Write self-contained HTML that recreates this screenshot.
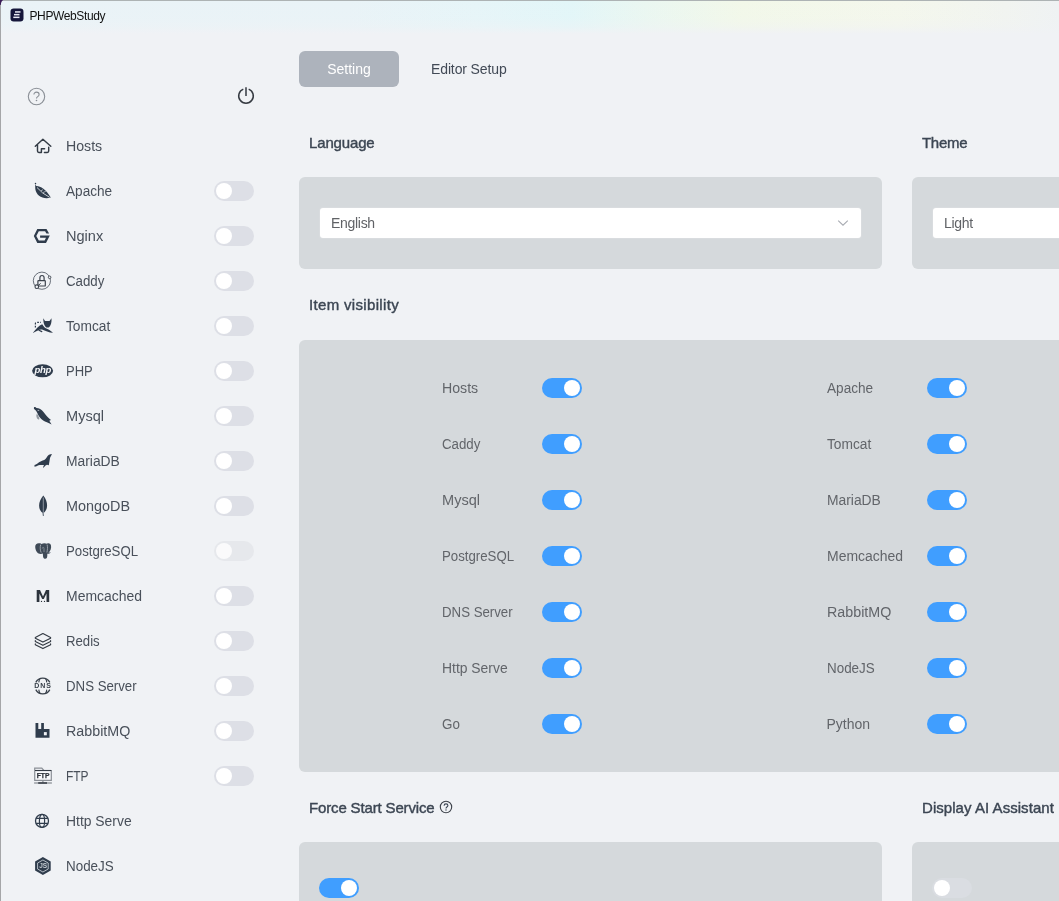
<!DOCTYPE html>
<html>
<head>
<meta charset="utf-8">
<style>
*{box-sizing:border-box;margin:0;padding:0}
html,body{width:1059px;height:901px;overflow:hidden;background:#f0f2f5;font-family:"Liberation Sans",sans-serif;}
#root{position:relative;width:1059px;height:901px;overflow:hidden;background:#f0f2f5;will-change:transform;filter:opacity(1);}
.abs{position:absolute}
#titlebar{left:0;top:0;width:1059px;height:36px;background:linear-gradient(to bottom,rgba(240,242,245,0) 0px,rgba(240,242,245,.08) 18px,rgba(240,242,245,.4) 27px,#f0f2f5 34px),linear-gradient(to right,#eaf3f7 0%,#e9f3f7 33%,#e6f5f8 45%,#e2f6f8 54%,#eaf7f1 61%,#f2f8e9 70%,#f4f7ec 85%,#f1f4f0 95%,#eff2f3 100%);}
#topline{left:0;top:0;width:1059px;height:1px;background:#adb3b4}
#leftline{left:0;top:0;width:1px;height:901px;background:#a5a6a8}
#title{left:29.5px;top:9px;letter-spacing:-0.38px;font-size:12px;color:#111;line-height:14px;white-space:nowrap}
.sb-item{left:0;width:280px;height:45px}
.sb-label{position:absolute;left:66px;top:14px;font-size:14px;line-height:16px;color:#49505a;white-space:nowrap;transform-origin:0 50%}
.sb-icon{position:absolute;left:30px;top:10px;width:24px;height:24px}
.sw{position:absolute;width:40px;height:20px;border-radius:10px;background:#dcdfe6}
.sw i{position:absolute;left:2px;top:2px;width:16px;height:16px;border-radius:50%;background:#fff}
.sw.on{background:#409eff}
.sw.on i{left:22px}
.sw.dis{background:#dddfe6}.sw.dis i{background:#fff}.sw.fade{background:#e6e8ec}.sw.fade i{background:#fafafb}.sw.fade2{background:#dadde2}.sw.fade2 i{background:#fff}
.sb-item .sw{left:214px;top:12px}
.h{font-size:15px;font-weight:normal;color:#3c4653;-webkit-text-stroke:0.4px #3c4653;line-height:18px;white-space:nowrap}
.panel{background:#d5d9dc;border-radius:6px}
.sel{background:#fff;border-radius:3px;height:30px;font-size:14px;color:#606266;line-height:30px;padding-left:11px;letter-spacing:-0.3px;box-shadow:0 0 0 1px #d9dcdf}
.vis{font-size:14px;color:#62656a;line-height:16px;white-space:nowrap;transform-origin:0 50%}
</style>
</head>
<body>
<div id="root">
<div id="titlebar" class="abs"></div>
<div id="topline" class="abs"></div>
<div id="leftline" class="abs"></div>
<svg class="abs" style="left:0;top:0" width="6" height="7" viewBox="0 0 6 7"><path d="M0 0H3.200C1.800 .8 1 2.300 .9 4.800L0 5z" fill="#3b1d57"/></svg>
<svg class="abs" style="left:10px;top:8px" width="14" height="14" viewBox="0 0 14 14"><rect x="0.5" y="0.5" width="13" height="13" rx="3.2" fill="#15163a"/><rect x="5" y="3.2" width="5.5" height="1.5" fill="#e8e9f4"/><rect x="4" y="5.9" width="5.5" height="1.5" fill="#e8e9f4"/><rect x="3.3" y="8.6" width="6.2" height="1.5" fill="#e8e9f4"/></svg>
<div id="title" class="abs">PHPWebStudy</div>

<!-- sidebar top icons -->
<svg class="abs" style="left:27px;top:87px" width="19" height="19" viewBox="0 0 19 19"><circle cx="9.5" cy="9.5" r="8.2" fill="none" stroke="#8a8f96" stroke-width="1.1"/><path d="M6.9 7.6c0-1.5 1.1-2.5 2.6-2.5s2.6 1 2.6 2.3c0 1.2-.7 1.7-1.4 2.2-.7.5-1.2.9-1.2 1.9" fill="none" stroke="#8a8f96" stroke-width="1.1"/><circle cx="9.5" cy="13.5" r=".8" fill="#8a8f96"/></svg>
<svg class="abs" style="left:236px;top:86px" width="20" height="20" viewBox="0 0 20 20"><path d="M7.300 3.100A7.300 7.300 0 1 0 12.700 3.100" fill="none" stroke="#363b42" stroke-width="1.5"/><path d="M10 1.300V10" stroke="#4a4f56" stroke-width="1.700"/></svg>

<div class="abs sb-item" style="top:124px"><svg class="sb-icon" viewBox="0 0 24 24"><path d="M5.3 12.3L12.9 5.3l7.900 7M7.500 10.800V17q0 1.400 1.400 1.400H11.400V14.700H14.600M18.700 13.300V17q0 1.400-1.400 1.400H14.400" fill="none" stroke="#333b45" stroke-width="1.45" stroke-linejoin="round" stroke-linecap="round"/></svg><div class="sb-label" style="transform:scaleX(1.01)">Hosts</div></div>
<div class="abs sb-item" style="top:169px"><svg class="sb-icon" viewBox="0 0 24 24"><path d="M5.300 4.200C5.400 5.800 5.800 6.500 6.600 7C10.500 7 16 10.500 20.800 18.600C13.500 20.900 6.300 17 5.300 10C5.100 7.800 5.200 6 5.300 4.200z" fill="#2f3c4c"/><circle cx="5.500" cy="4.600" r=".75" fill="#2f3c4c"/><path d="M7 8.500Q12 14.500 19.600 18.300" fill="none" stroke="#f0f2f5" stroke-width=".8"/><path d="M11 11.800l2-1.200M13 13.600l2.800-1.300" fill="none" stroke="#f0f2f5" stroke-width=".6"/></svg><div class="sb-label" style="transform:scaleX(0.972)">Apache</div><div class="sw dis"><i></i></div></div>
<div class="abs sb-item" style="top:214px"><svg class="sb-icon" viewBox="0 0 24 24"><path d="M7.300 4.900H16.500L19.100 9.500H16.400L15.100 7.300H8.800L6.300 12L8.800 16.500H14.600L16 13.800H10.100V11.600H19.800L16 18.900H7.300L3.800 12z" fill="#2f3c4c"/></svg><div class="sb-label" style="transform:scaleX(1.04)">Nginx</div><div class="sw dis"><i></i></div></div>
<div class="abs sb-item" style="top:259px"><svg class="sb-icon" viewBox="0 0 24 24"><circle cx="11.900" cy="11.700" r="8.600" fill="none" stroke="#59616b" stroke-width=".9"/><rect x="7.900" y="11.700" width="7.400" height="5.300" rx=".6" fill="#f0f2f5" stroke="#3c434d" stroke-width="1.200"/><path d="M9.900 11.700V8.800a2.100 2.300 0 0 1 4.200 0v2.900" fill="none" stroke="#3c434d" stroke-width="1.200"/><circle cx="19.600" cy="8.300" r="1.300" fill="#f0f2f5" stroke="#3c434d" stroke-width=".9"/><circle cx="6.800" cy="17.700" r="1.800" fill="#f0f2f5" stroke="#3c434d" stroke-width="1.100"/><path d="M8.200 16.500l2.500-2.100" stroke="#3c434d" stroke-width="1"/></svg><div class="sb-label" style="transform:scaleX(0.949)">Caddy</div><div class="sw dis"><i></i></div></div>
<div class="abs sb-item" style="top:304px"><svg class="sb-icon" viewBox="0 0 24 24"><path d="M13.300 4.300L15 7H19.500L21.500 4.300C21.800 8 21 11 19.500 12.700C18.500 13.900 16.500 13.900 15.500 12.700C13.800 10.700 13.200 8 13.300 4.300z" fill="#2f3c4c"/><path d="M3 18.800C6 15 9 11.500 12.200 10.200C13.500 12.500 15 14 17.500 15C19.500 15.800 21.500 17.500 23 18.800C19 18.800 15 16.500 12 15.500C9.500 15 6.500 17.200 3 18.900z" fill="#2f3c4c"/><path d="M5.400 13.500V9.600Q5.400 8.400 6.600 8.400H11" fill="none" stroke="#2f3c4c" stroke-width="1.200" stroke-dasharray="1.700 1.400"/><path d="M9 16.200L11.800 17.600" stroke="#2f3c4c" stroke-width="1.200" stroke-linecap="round"/></svg><div class="sb-label" style="transform:scaleX(0.982)">Tomcat</div><div class="sw dis"><i></i></div></div>
<div class="abs sb-item" style="top:349px"><svg class="sb-icon" viewBox="0 0 24 24"><ellipse cx="12.600" cy="11.800" rx="10.500" ry="6.500" fill="#2f3c4c"/><text x="12.800" y="14.200" font-family="Liberation Sans" font-style="italic" font-weight="bold" font-size="9.600" fill="#f6f7f9" text-anchor="middle" letter-spacing="-.3">php</text></svg><div class="sb-label" style="transform:scaleX(0.93)">PHP</div><div class="sw dis"><i></i></div></div>
<div class="abs sb-item" style="top:394px"><svg class="sb-icon" viewBox="0 0 24 24"><path d="M4.100 3.200C5 2.900 6 3.300 6.500 4C9 4 11.500 5.500 13.500 8C15.500 10.500 17.500 13.500 21 16L19.300 16.800L21.600 20.400C18 18.800 15.500 17.800 13.200 16.500C10.500 15 8.500 12 7.300 9C6.500 7 5.500 6 4.600 5.500C3.800 5 3.700 3.800 4.100 3.200z" fill="#2f3c4c"/><path d="M7.600 6.400h1.600" stroke="#c9ced4" stroke-width=".8"/><path d="M6.800 9.800C5.800 11.500 6.300 14.500 8.300 15.500C9 15.700 9.600 15.200 9.300 14.300L8 11z" fill="#9299a1"/></svg><div class="sb-label" style="transform:scaleX(1.04)">Mysql</div><div class="sw dis"><i></i></div></div>
<div class="abs sb-item" style="top:439px"><svg class="sb-icon" viewBox="0 0 24 24"><path d="M21.900 5C21.500 6.500 20.500 7.500 20 9C19.500 11.500 19.300 14 18.800 16.300L17 15.800L15.500 16.500L13.500 18.800L13 18.300L14 16C12 16 10 15.800 8.500 16.300C7 17 6 17.800 4.500 17.800V16C6.500 15.500 8 14 9.500 13C11.500 11.800 14 11.500 15.500 10C17 8.500 17.500 6.500 19 5.800C20 5.300 21 5.300 21.900 5z" fill="#2f3c4c"/></svg><div class="sb-label" style="transform:scaleX(0.989)">MariaDB</div><div class="sw dis"><i></i></div></div>
<div class="abs sb-item" style="top:484px"><svg class="sb-icon" viewBox="0 0 24 24"><path d="M13.300 1.500C16 5 17.100 8 17.100 11.500C17.100 15 15.500 17.500 13.800 18.800L13.600 21.900H12.900L12.600 18.800C10.500 17.500 9.100 15 9.100 11.500C9.100 8 10.600 5 13.300 1.500z" fill="#2f3c4c"/><path d="M13.300 3.500V20.500" stroke="#b6bcc2" stroke-width=".7"/></svg><div class="sb-label" style="transform:scaleX(1.028)">MongoDB</div><div class="sw dis"><i></i></div></div>
<div class="abs sb-item" style="top:529px"><svg class="sb-icon" viewBox="0 0 24 24"><path d="M5.200 8C5 5.500 7 3.800 9.500 4.200C10.500 4.300 11 4.700 11.500 5C13 4 15.500 4 17 4.800C18.500 3.800 20.500 4.500 21 6.500C21.500 9 20.500 12 18.500 13.800L20.800 13.300C20 14.500 18.500 15 17.300 14.800C17.300 16.500 17.400 18 16.800 19C16 20.200 13.800 20 13.300 18.500C12.900 17 13 15.500 12.800 14.500C11.500 15.100 9.500 15 8 14.200C6.300 13 5.300 10.500 5.200 8z" fill="#3f4a57"/><path d="M10.700 5.600C9.900 8 10.100 11.500 11.200 13.600M17.100 5.600C17.800 8 17.500 11 16.900 13.500" fill="none" stroke="#aeb5bd" stroke-width=".8"/><path d="M12.300 9.500C12.300 8 14 8 14 9.500V13" fill="none" stroke="#98a0a9" stroke-width=".7"/></svg><div class="sb-label" style="transform:scaleX(0.945)">PostgreSQL</div><div class="sw fade"><i></i></div></div>
<div class="abs sb-item" style="top:574px"><svg class="sb-icon" viewBox="0 0 24 24"><path d="M6.700 18.100V5.900H10L13 12.500L16 5.900H19.200V18.100H16.500V9.500L13.800 15H12.200L9.400 9.500V18.100z" fill="#2c333c"/><circle cx="11.500" cy="17.400" r=".65" fill="#2c333c"/><circle cx="14.500" cy="17.400" r=".65" fill="#2c333c"/></svg><div class="sb-label" style="transform:scaleX(0.997)">Memcached</div><div class="sw dis"><i></i></div></div>
<div class="abs sb-item" style="top:619px"><svg class="sb-icon" viewBox="0 0 24 24"><path d="M12.900 4.500L20.600 8.400V9.200L12.900 13.100L5.300 9.200V8.400z M5.300 11.600v.8L12.900 16.300L20.600 12.400v-.8 M5.300 14.900v.8L12.900 19.600L20.600 15.700v-.8" fill="none" stroke="#333a43" stroke-width="1.150" stroke-linejoin="round" stroke-linecap="round"/></svg><div class="sb-label" style="transform:scaleX(0.94)">Redis</div><div class="sw dis"><i></i></div></div>
<div class="abs sb-item" style="top:664px"><svg class="sb-icon" viewBox="0 0 24 24"><path d="M5.800 8.400A7.900 7.900 0 0 1 19.800 8.400M5.800 15.600A7.900 7.900 0 0 0 19.800 15.600" fill="none" stroke="#38404a" stroke-width="1.300"/><path d="M10 4.800Q9 6.300 8.800 8.400M15.600 4.800Q16.600 6.300 16.800 8.400M10 19.200Q9 17.700 8.800 15.600M15.600 19.200Q16.600 17.700 16.800 15.600" fill="none" stroke="#38404a" stroke-width="1.100"/><text x="13.100" y="14.300" font-family="Liberation Sans" font-weight="bold" font-size="7" fill="#38404a" text-anchor="middle" letter-spacing=".9">DNS</text></svg><div class="sb-label" style="transform:scaleX(0.946)">DNS Server</div><div class="sw dis"><i></i></div></div>
<div class="abs sb-item" style="top:709px"><svg class="sb-icon" viewBox="0 0 24 24"><path d="M5.500 4.100H8.300V10H11.200V4.100H13.900V10H19.500V18.800H5.500z" fill="#2f3c4c"/><rect x="13.900" y="13.100" width="2.900" height="3.200" fill="#f0f2f5"/></svg><div class="sb-label" style="transform:scaleX(1.02)">RabbitMQ</div><div class="sw dis"><i></i></div></div>
<div class="abs sb-item" style="top:754px"><svg class="sb-icon" viewBox="0 0 24 24"><path d="M4.700 16.300V4.100H11.800L13.800 6.500H21.300V16.300z" fill="none" stroke="#8b9097" stroke-width="1.200"/><rect x="6.100" y="7.700" width="14" height="7.500" fill="#f8f9fb"/><path d="M5 6.500H21.300" stroke="#333a43" stroke-width="1.100"/><text x="13.100" y="13.600" font-family="Liberation Sans" font-weight="bold" font-size="6.700" fill="#2b3139" stroke="#2b3139" stroke-width=".25" text-anchor="middle" letter-spacing=".1">FTP</text><path d="M12.900 16.300v2.500" stroke="#8b9097" stroke-width="1.300"/><path d="M4.100 19H21.900" stroke="#8b9097" stroke-width="1.300"/><path d="M8.200 19H17" stroke="#333a43" stroke-width="1.500"/></svg><div class="sb-label" style="transform:scaleX(0.855)">FTP</div><div class="sw dis"><i></i></div></div>
<div class="abs sb-item" style="top:799px"><svg class="sb-icon" viewBox="0 0 24 24"><circle cx="12" cy="11.900" r="6.500" fill="none" stroke="#2f3c4c" stroke-width="1.300"/><ellipse cx="12" cy="11.900" rx="2.600" ry="6.500" fill="none" stroke="#2f3c4c" stroke-width="1.200"/><path d="M6.200 9.300H17.800M6.200 14.400H17.800" stroke="#2f3c4c" stroke-width="1.200"/></svg><div class="sb-label" style="transform:scaleX(0.992)">Http Serve</div></div>
<div class="abs sb-item" style="top:844px"><svg class="sb-icon" viewBox="0 0 24 24"><path d="M12.900 3.100L20.700 7.600V16.400L12.900 20.900L5.100 16.400V7.600z" fill="#2f3c4c"/><path d="M12.900 6L18.200 9V15L12.900 18L7.600 15V9z" fill="none" stroke="#c3cad1" stroke-width=".9"/><text x="13" y="14.300" font-family="Liberation Sans" font-weight="bold" font-size="6.500" fill="#c3cad1" text-anchor="middle" letter-spacing="-.3">JS</text></svg><div class="sb-label" style="transform:scaleX(0.958)">NodeJS</div></div>

<!-- tabs -->
<div class="abs" style="left:299px;top:51px;width:100px;height:36px;border-radius:6px;background:#adb3bc;color:#fff;font-size:14px;line-height:36px;text-align:center">Setting</div>
<div class="abs" style="left:431px;top:61px;font-size:14px;line-height:16px;color:#424a56;white-space:nowrap;letter-spacing:-0.12px">Editor Setup</div>

<!-- Language -->
<div class="abs h" style="left:309px;top:134px;letter-spacing:-0.15px">Language</div>
<div class="abs panel" style="left:299px;top:177px;width:583px;height:92px"></div>
<div class="abs sel" style="left:320px;top:208px;width:541px">English</div>
<svg class="abs" style="left:836px;top:216px" width="14" height="14" viewBox="0 0 14 14"><path d="M2.2 4.6L7 9.2l4.8-4.6" fill="none" stroke="#a8abb2" stroke-width="1.1"/></svg>

<!-- Theme -->
<div class="abs h" style="left:922px;top:134px;letter-spacing:-0.29px">Theme</div>
<div class="abs panel" style="left:912px;top:177px;width:583px;height:92px"></div>
<div class="abs sel" style="left:933px;top:208px;width:541px">Light</div>

<!-- Item visibility -->
<div class="abs h" style="left:309px;top:296px;letter-spacing:0.33px">Item visibility</div>
<div class="abs panel" style="left:299px;top:340px;width:1196px;height:431.5px"></div>
<div class="abs vis" style="left:441.8px;top:380px;transform:scaleX(1.01)">Hosts</div><div class="abs sw on" style="left:542px;top:378px"><i></i></div>
<div class="abs vis" style="left:826.5px;top:380px;transform:scaleX(0.972)">Apache</div><div class="abs sw on" style="left:927px;top:378px"><i></i></div>
<div class="abs vis" style="left:441.8px;top:436px;transform:scaleX(0.949)">Caddy</div><div class="abs sw on" style="left:542px;top:434px"><i></i></div>
<div class="abs vis" style="left:826.5px;top:436px;transform:scaleX(0.982)">Tomcat</div><div class="abs sw on" style="left:927px;top:434px"><i></i></div>
<div class="abs vis" style="left:441.8px;top:492px;transform:scaleX(1.04)">Mysql</div><div class="abs sw on" style="left:542px;top:490px"><i></i></div>
<div class="abs vis" style="left:826.5px;top:492px;transform:scaleX(0.989)">MariaDB</div><div class="abs sw on" style="left:927px;top:490px"><i></i></div>
<div class="abs vis" style="left:441.8px;top:548px;transform:scaleX(0.945)">PostgreSQL</div><div class="abs sw on" style="left:542px;top:546px"><i></i></div>
<div class="abs vis" style="left:826.5px;top:548px;transform:scaleX(0.997)">Memcached</div><div class="abs sw on" style="left:927px;top:546px"><i></i></div>
<div class="abs vis" style="left:441.8px;top:604px;transform:scaleX(0.946)">DNS Server</div><div class="abs sw on" style="left:542px;top:602px"><i></i></div>
<div class="abs vis" style="left:826.5px;top:604px;transform:scaleX(1.02)">RabbitMQ</div><div class="abs sw on" style="left:927px;top:602px"><i></i></div>
<div class="abs vis" style="left:441.8px;top:660px;transform:scaleX(0.992)">Http Serve</div><div class="abs sw on" style="left:542px;top:658px"><i></i></div>
<div class="abs vis" style="left:826.5px;top:660px;transform:scaleX(0.958)">NodeJS</div><div class="abs sw on" style="left:927px;top:658px"><i></i></div>
<div class="abs vis" style="left:441.8px;top:716px;transform:scaleX(0.956)">Go</div><div class="abs sw on" style="left:542px;top:714px"><i></i></div>
<div class="abs vis" style="left:826.5px;top:716px;transform:scaleX(1.0)">Python</div><div class="abs sw on" style="left:927px;top:714px"><i></i></div>

<!-- Force start -->
<div class="abs h" style="left:309px;top:798.5px;letter-spacing:-0.15px">Force Start Service</div>
<svg class="abs" style="left:439px;top:800px" width="14" height="14" viewBox="0 0 14 14"><circle cx="7" cy="7" r="5.7" fill="none" stroke="#3c4149" stroke-width="1.1"/><path d="M5.1 5.7c0-1.1.8-1.8 1.9-1.8s1.9.7 1.9 1.6c0 .8-.5 1.2-1 1.5-.5.4-.9.7-.9 1.4" fill="none" stroke="#3a4452" stroke-width="1.1"/><circle cx="7" cy="10" r=".7" fill="#3a4452"/></svg>
<div class="abs panel" style="left:299px;top:842px;width:583px;height:92px"></div>
<div class="abs sw on" style="left:319px;top:878px"><i></i></div>

<div class="abs h" style="left:922px;top:798.5px;letter-spacing:0.05px">Display AI Assistant</div>
<div class="abs panel" style="left:912px;top:842px;width:583px;height:92px"></div>
<div class="abs sw fade2" style="left:932px;top:878px"><i></i></div>

</div>
</body>
</html>
